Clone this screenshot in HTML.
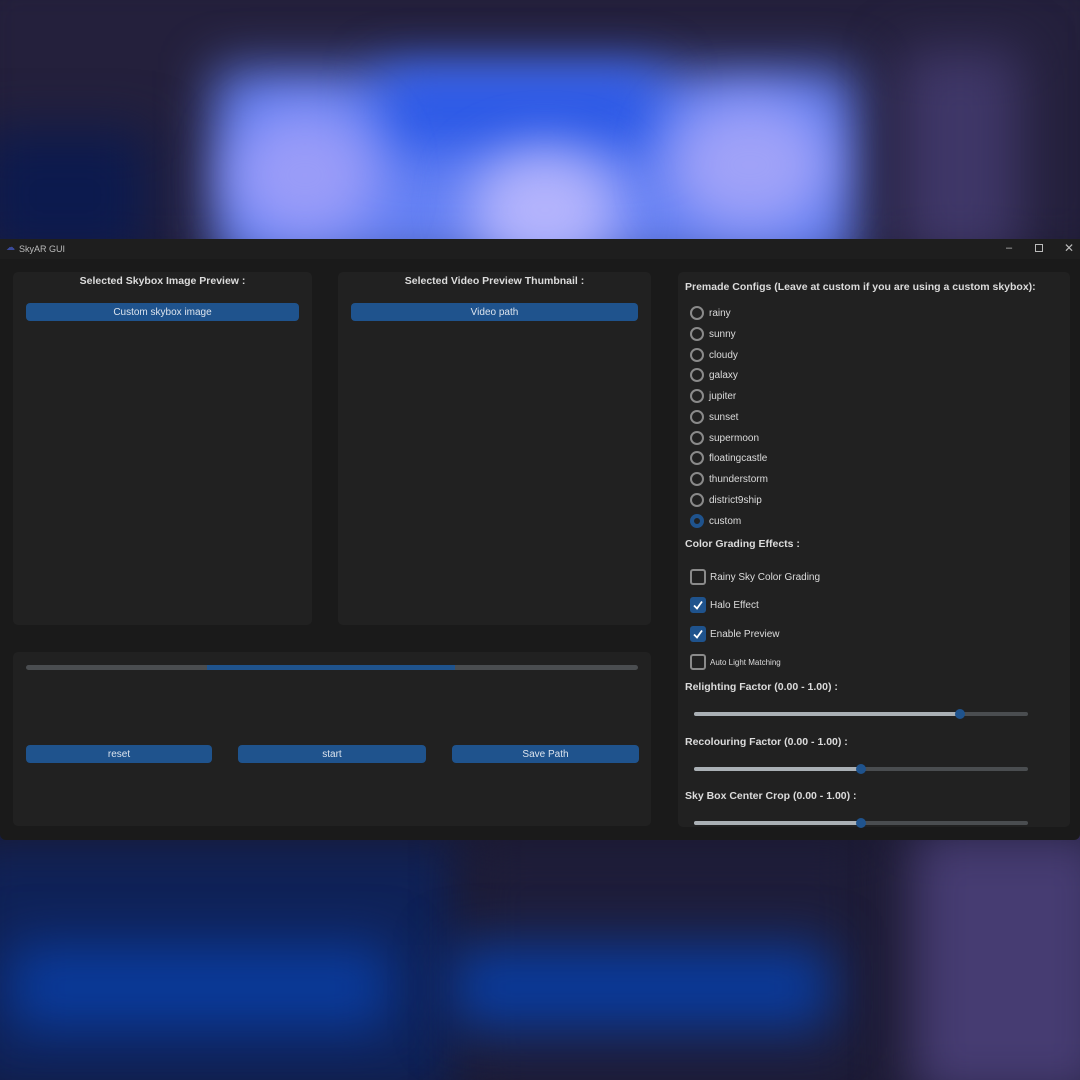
<!DOCTYPE html>
<html><head><meta charset="utf-8"><style>
*{margin:0;padding:0;box-sizing:border-box}
body{width:1080px;height:1080px;overflow:hidden;background:#1b1930;font-family:"Liberation Sans",sans-serif;position:relative}
.bg{position:absolute;left:0;top:0;width:1080px;height:1080px;overflow:hidden}
.b{position:absolute;filter:blur(26px)}
.win{position:absolute;left:0;top:239px;width:1080px;height:601px;background:#1a1a1a;border-radius:0 0 6px 6px}
.tb{position:absolute;left:0;top:0;width:1080px;height:20px;background:#1e1e1e;color:#bbb;font-size:9px}
.p{position:absolute;background:#212121;border-radius:5px}
.h{position:absolute;color:#dcdcdc;font-weight:bold;font-size:10.5px;white-space:nowrap}
.btn{position:absolute;background:#1f538d;border-radius:4px;color:#dce4ee;font-size:10px;display:flex;align-items:center;justify-content:center;height:18px}
.r{position:absolute;left:690px;color:#dcdcdc;font-size:10px;height:16px}
.r i{position:absolute;left:0;top:1px;width:14px;height:14px;border:2px solid #8a8a8a;border-radius:50%}
.r span{position:absolute;left:19px;top:3px;white-space:nowrap}
.c{position:absolute;left:690px;color:#dcdcdc;font-size:10px;height:16px;white-space:nowrap}
.c i{position:absolute;left:0;top:0;width:16px;height:16px;border:2px solid #8a8a8a;border-radius:3px}
.c i.on{background:#1f538d;border-color:#1f538d}
.c span{position:absolute;left:20px;top:3px}
.sl{position:absolute;left:694px;width:334px;height:4px;background:#4a4d50;border-radius:2px}
.sl b{position:absolute;left:0;top:0;height:4px;background:#aab0b5;border-radius:2px}
.sl em{position:absolute;top:-3px;width:10px;height:10px;border-radius:50%;background:#1f538d}
</style></head><body>
<div class="bg">
<div class="b" style="left:-40px;top:-40px;width:1160px;height:300px;background:#24203c"></div>
<div class="b" style="left:-20px;top:130px;width:170px;height:130px;background:#0c1a4e"></div>
<div class="b" style="left:215px;top:70px;width:640px;height:200px;background:#6480f4"></div>
<div class="b" style="left:380px;top:70px;width:280px;height:80px;background:#2a58e6"></div>
<div class="b" style="left:230px;top:110px;width:150px;height:130px;background:#9a9cf8;border-radius:50%"></div>
<div class="b" style="left:470px;top:150px;width:150px;height:120px;background:#b4b4fc;border-radius:50%"></div>
<div class="b" style="left:670px;top:100px;width:160px;height:130px;background:#a0a2f8;border-radius:50%"></div>
<div class="b" style="left:900px;top:50px;width:120px;height:210px;background:#3f3768"></div>
<div class="b" style="left:-40px;top:840px;width:500px;height:260px;background:#0f2258"></div>
<div class="b" style="left:470px;top:840px;width:400px;height:260px;background:#1e1d3a"></div>
<div class="b" style="left:10px;top:945px;width:380px;height:85px;background:#0a3a9a"></div>
<div class="b" style="left:450px;top:945px;width:380px;height:85px;background:#0a3a9a"></div>
<div class="b" style="left:910px;top:830px;width:200px;height:270px;background:#463c72"></div>
</div>
<div class="win">
<div class="tb"><span style="position:absolute;left:6px;top:3px;color:#3a4a9a">☁</span><span style="position:absolute;left:19px;top:5px">SkyAR GUI</span>
<span style="position:absolute;left:1006px;top:3px;font-size:11px">–</span>
<span style="position:absolute;left:1035px;top:5px;width:8px;height:8px;border:1px solid #bbb"></span>
<span style="position:absolute;left:1064px;top:2px;font-size:12px">✕</span></div>
<div class="p" style="left:13px;top:33px;width:299px;height:353px"></div>
<div class="p" style="left:338px;top:33px;width:313px;height:353px"></div>
<div class="p" style="left:13px;top:413px;width:638px;height:174px"></div>
<div class="p" style="left:678px;top:33px;width:392px;height:555px"></div>
<div class="h" style="left:13px;width:299px;text-align:center;top:36px">Selected Skybox Image Preview :</div>
<div class="h" style="left:338px;width:313px;text-align:center;top:36px">Selected Video Preview Thumbnail :</div>
<div class="btn" style="left:26px;top:64px;width:273px">Custom skybox image</div>
<div class="btn" style="left:351px;top:64px;width:287px">Video path</div>
<div style="position:absolute;left:26px;top:426px;width:612px;height:5px;background:#4a4d50;border-radius:3px"><div style="position:absolute;left:181px;width:248px;height:5px;background:#1f538d"></div></div>
<div class="btn" style="left:26px;top:506px;width:186px">reset</div>
<div class="btn" style="left:238px;top:506px;width:188px">start</div>
<div class="btn" style="left:452px;top:506px;width:187px">Save Path</div>
<div class="h" style="left:685px;top:42px">Premade Configs (Leave at custom if you are using a custom skybox):</div>
<div class="r" style="top:66px"><i></i><span>rainy</span></div>
<div class="r" style="top:87px"><i></i><span>sunny</span></div>
<div class="r" style="top:108px"><i></i><span>cloudy</span></div>
<div class="r" style="top:128px"><i></i><span>galaxy</span></div>
<div class="r" style="top:149px"><i></i><span>jupiter</span></div>
<div class="r" style="top:170px"><i></i><span>sunset</span></div>
<div class="r" style="top:191px"><i></i><span>supermoon</span></div>
<div class="r" style="top:211px"><i></i><span>floatingcastle</span></div>
<div class="r" style="top:232px"><i></i><span>thunderstorm</span></div>
<div class="r" style="top:253px"><i></i><span>district9ship</span></div>
<div class="r" style="top:274px"><i style="border:4px solid #1f538d"></i><span>custom</span></div>
<div class="h" style="left:685px;top:299px">Color Grading Effects :</div>
<div class="c" style="top:330px"><i></i><span>Rainy Sky Color Grading</span></div>
<div class="c" style="top:358px"><i class="on"><svg width="12" height="12" viewBox="0 0 12 12" style="position:absolute;left:0;top:0"><path d="M2 6.5L5 9.5L10 2.5" stroke="#fff" stroke-width="1.8" fill="none"/></svg></i><span>Halo Effect</span></div>
<div class="c" style="top:387px"><i class="on"><svg width="12" height="12" viewBox="0 0 12 12" style="position:absolute;left:0;top:0"><path d="M2 6.5L5 9.5L10 2.5" stroke="#fff" stroke-width="1.8" fill="none"/></svg></i><span>Enable Preview</span></div>
<div class="c" style="top:415px"><i></i><span style="font-size:8px;top:4px">Auto Light Matching</span></div>
<div class="h" style="left:685px;top:442px">Relighting Factor (0.00 - 1.00) :</div>
<div class="sl" style="top:473px"><b style="width:266px"></b><em style="left:261px"></em></div>
<div class="h" style="left:685px;top:497px">Recolouring Factor (0.00 - 1.00) :</div>
<div class="sl" style="top:528px"><b style="width:167px"></b><em style="left:162px"></em></div>
<div class="h" style="left:685px;top:551px">Sky Box Center Crop (0.00 - 1.00) :</div>
<div class="sl" style="top:582px"><b style="width:167px"></b><em style="left:162px"></em></div>
</div>
</body></html>
